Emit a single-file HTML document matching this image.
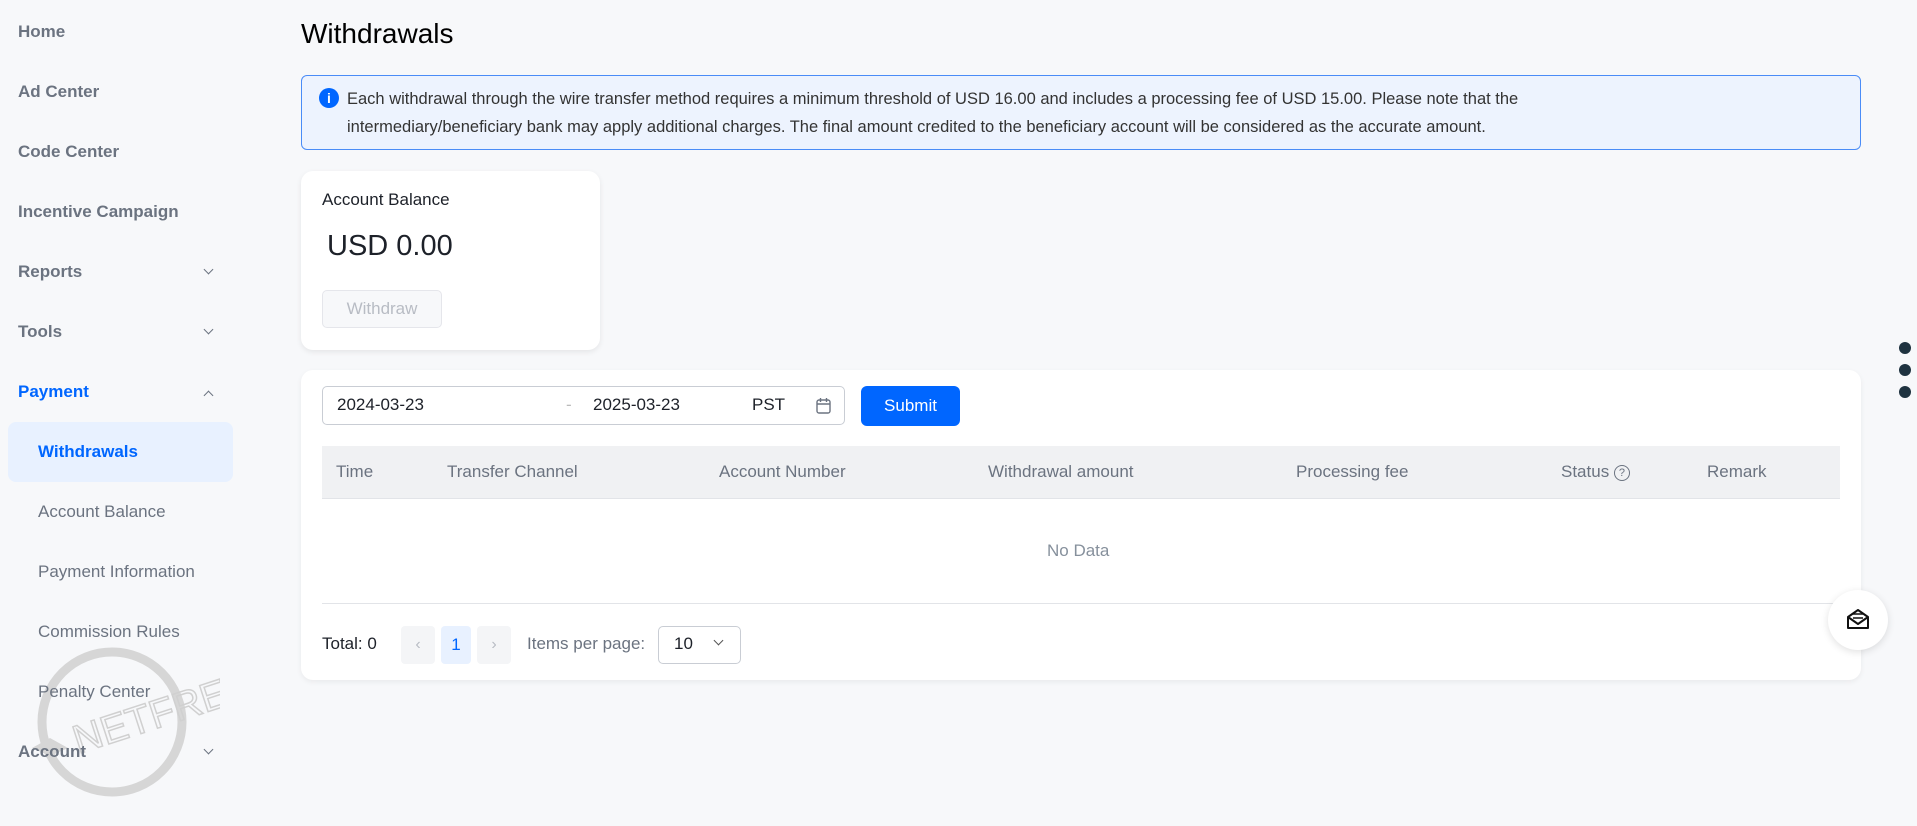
<!DOCTYPE html>
<html><head><meta charset="utf-8"><style>
*{box-sizing:border-box;margin:0;padding:0}
body{width:1917px;height:826px;background:#f7f8fa;font-family:"Liberation Sans",sans-serif;position:relative;overflow:hidden;color:#1d2129}
.abs{position:absolute}
.nav{position:absolute;left:18px;font-size:17px;color:#6b7380;font-weight:bold;transform:translateY(-50%)}
.sub{position:absolute;left:38px;font-size:17px;color:#6b7380;transform:translateY(-50%)}
.chev{position:absolute;left:205px;width:7px;height:7px;border-right:1.5px solid #6b7380;border-bottom:1.5px solid #6b7380;transform:rotate(45deg)}
.th{position:absolute;top:472px;transform:translateY(-50%);font-size:17px;color:#6b7380}
.pb{position:absolute;top:626px;height:38px;border-radius:4px;background:#f4f5f7}
</style></head><body>
<svg class="abs" style="left:20px;top:630px" width="200" height="170"><circle cx="92" cy="92" r="70" fill="none" stroke="#d6d6d6" stroke-width="9"/><text x="50" y="112" font-size="40" fill="none" stroke="#d0d0d0" stroke-width="1.5" font-family="Liberation Sans" transform="rotate(-18 92 92)">NETFREE</text><path d="M12 118l18-10 18 10-18 8z" fill="#d6d6d6"/></svg>
<div class="nav" style="top:32px">Home</div>
<div class="nav" style="top:92px">Ad Center</div>
<div class="nav" style="top:152px">Code Center</div>
<div class="nav" style="top:212px">Incentive Campaign</div>
<div class="nav" style="top:272px">Reports</div><div class="chev" style="top:266px"></div>
<div class="nav" style="top:332px">Tools</div><div class="chev" style="top:326px"></div>
<div class="nav" style="top:392px;color:#0066ff">Payment</div><div class="chev" style="top:392px;transform:rotate(225deg)"></div>
<div class="abs" style="left:8px;top:422px;width:225px;height:60px;background:#e8f1ff;border-radius:8px"></div>
<div class="sub" style="top:452px;color:#0066ff;font-weight:bold">Withdrawals</div>
<div class="sub" style="top:512px">Account Balance</div>
<div class="sub" style="top:572px">Payment Information</div>
<div class="sub" style="top:632px">Commission Rules</div>
<div class="sub" style="top:692px">Penalty Center</div>
<div class="nav" style="top:752px">Account</div><div class="chev" style="top:746px"></div>

<div class="abs" style="left:301px;top:18px;font-size:28px;color:#000">Withdrawals</div>
<div class="abs" style="left:301px;top:75px;width:1560px;height:75px;background:#edf3fe;border:1px solid #4a8cf7;border-radius:6px"></div>
<div class="abs" style="left:319px;top:88px;width:20px;height:20px;border-radius:50%;background:#0066ff;color:#fff;font-size:14px;font-weight:bold;text-align:center;line-height:20px">i</div>
<div class="abs" style="left:347px;top:85px;width:1500px;font-size:16.5px;line-height:28px;color:#333">Each withdrawal through the wire transfer method requires a minimum threshold of USD 16.00 and includes a processing fee of USD 15.00. Please note that the<br>intermediary/beneficiary bank may apply additional charges. The final amount credited to the beneficiary account will be considered as the accurate amount.</div>

<div class="abs" style="left:301px;top:171px;width:299px;height:179px;background:#fff;border-radius:12px;box-shadow:0 2px 6px rgba(0,0,0,.08)"></div>
<div class="abs" style="left:322px;top:190px;font-size:17px;color:#1d2129">Account Balance</div>
<div class="abs" style="left:327px;top:230px;font-size:29px;color:#1d2129">USD 0.00</div>
<div class="abs" style="left:322px;top:290px;width:120px;height:38px;border:1px solid #e5e6eb;border-radius:5px;background:#f7f8fa;color:#b8bcc4;font-size:17px;text-align:center;line-height:36px">Withdraw</div>

<div class="abs" style="left:301px;top:370px;width:1560px;height:310px;background:#fff;border-radius:12px;box-shadow:0 2px 6px rgba(0,0,0,.06)"></div>
<div class="abs" style="left:322px;top:386px;width:523px;height:39px;border:1px solid #c9cdd4;border-radius:5px"></div>
<div class="abs" style="left:337px;top:395px;font-size:17px">2024-03-23</div>
<div class="abs" style="left:566px;top:395px;font-size:17px;color:#bbb">-</div>
<div class="abs" style="left:593px;top:395px;font-size:17px">2025-03-23</div>
<div class="abs" style="left:752px;top:395px;font-size:17px">PST</div>
<svg class="abs" style="left:815px;top:396px" width="18" height="19"><rect x="2" y="4" width="13" height="13" rx="2" fill="none" stroke="#6b7380" stroke-width="1.4"/><path d="M2 8h13M5.5 2v4M11.5 2v4" stroke="#6b7380" stroke-width="1.4"/></svg>
<div class="abs" style="left:861px;top:386px;width:99px;height:40px;background:#0066ff;border-radius:6px;color:#fff;font-size:17px;text-align:center;line-height:40px">Submit</div>
<div class="abs" style="left:322px;top:446px;width:1518px;height:53px;background:#f0f1f3;border-bottom:1px solid #e2e4e8"></div>
<div class="th" style="left:336px">Time</div>
<div class="th" style="left:447px">Transfer Channel</div>
<div class="th" style="left:719px">Account Number</div>
<div class="th" style="left:988px">Withdrawal amount</div>
<div class="th" style="left:1296px">Processing fee</div>
<div class="th" style="left:1561px">Status <span style="display:inline-block;width:16px;height:16px;border:1.4px solid #6b7380;border-radius:50%;font-size:11px;text-align:center;line-height:14px;vertical-align:1px">?</span></div>
<div class="th" style="left:1707px">Remark</div>
<div class="abs" style="left:1047px;top:541px;font-size:17px;color:#86909c">No Data</div>
<div class="abs" style="left:322px;top:603px;width:1518px;height:1px;background:#e2e4e8"></div>
<div class="abs" style="left:322px;top:634px;font-size:17px">Total: 0</div>
<div class="pb" style="left:401px;width:34px;color:#b8bcc4;text-align:center;line-height:38px">‹</div>
<div class="pb" style="left:441px;width:30px;background:#e8f1ff;color:#0066ff;text-align:center;line-height:38px;font-size:17px">1</div>
<div class="pb" style="left:477px;width:34px;color:#b8bcc4;text-align:center;line-height:38px">›</div>
<div class="abs" style="left:527px;top:634px;font-size:17px;color:#6b7380">Items per page:</div>
<div class="abs" style="left:658px;top:626px;width:83px;height:38px;border:1px solid #c9cdd4;border-radius:5px"></div>
<div class="abs" style="left:674px;top:634px;font-size:17px">10</div>
<div class="abs" style="left:715px;top:637px;width:7px;height:7px;border-right:1.5px solid #555;border-bottom:1.5px solid #555;transform:rotate(45deg)"></div>

<div class="abs" style="left:1899px;top:342px;width:12px;height:12px;border-radius:50%;background:#1f3340"></div>
<div class="abs" style="left:1899px;top:364px;width:12px;height:12px;border-radius:50%;background:#1f3340"></div>
<div class="abs" style="left:1899px;top:386px;width:12px;height:12px;border-radius:50%;background:#1f3340"></div>
<div class="abs" style="left:1828px;top:590px;width:60px;height:60px;border-radius:50%;background:#fff;box-shadow:0 2px 8px rgba(0,0,0,.12)"></div>
<svg class="abs" style="left:1845px;top:606px" width="26" height="26"><path d="M3 11l10-7 10 7v11H3z M3 11l10 7 10-7" fill="none" stroke="#111" stroke-width="2" stroke-linejoin="round"/><path d="M8 8h10M8 12h10" stroke="#111" stroke-width="1.6"/></svg>
</body></html>
